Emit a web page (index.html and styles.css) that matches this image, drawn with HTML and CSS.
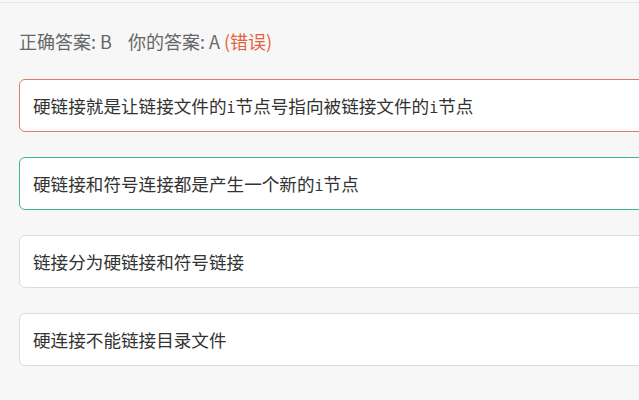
FILE: index.html
```html
<html>

<head>
	<title>答题结果</title>
	<link rel="stylesheet" href="styles.css">
</head>

<body>
	<div class="page">
		<div class="result">
			<span class="answer">正确答案: B</span>
			<span class="answer">你的答案: A <span class="wrong">(错误)</span></span>
		</div>

		<div class="options">
			<div class="option chosen">硬链接就是让链接文件的<span class="mono">i</span>节点号指向被链接文件的<span class="mono">i</span>节点</div>
			<div class="option correct">硬链接和符号连接都是产生一个新的<span class="mono">i</span>节点</div>
			<div class="option">链接分为硬链接和符号链接</div>
			<div class="option">硬连接不能链接目录文件</div>
		</div>
	</div>
</body>
</html>
```

FILE: styles.css
```css
body {
	margin: 0;
	background-color: #f7f7f7;
	font-family: "Noto Sans CJK SC", "Liberation Sans", sans-serif;
	overflow: hidden;
}

.page {
	margin-top: 2px;
	border-top: 1px solid #e6e6e6;
	padding: 26px 0 0 19px;
}

.result {
	font-size: 18px;
	color: #666666;
	line-height: 24px;
}

.answer {
	margin-right: 12px;
}

.wrong {
	color: #e4633f;
}

.options {
	width: 680px;
	margin-top: 26px;
}

.option {
	height: 51px;
	line-height: 51px;
	padding-left: 13px;
	margin-bottom: 25px;
	background-color: #ffffff;
	border: 1px solid #dcdcdc;
	border-radius: 6px;
	font-size: 17.6px;
	color: #333333;
}

.option.chosen {
	border-color: #e07a6a;
}

.option.correct {
	border-color: #3cb39c;
}

.mono {
	font-family: "DejaVu Sans Mono", monospace;
	font-size: 15px;
}
```
